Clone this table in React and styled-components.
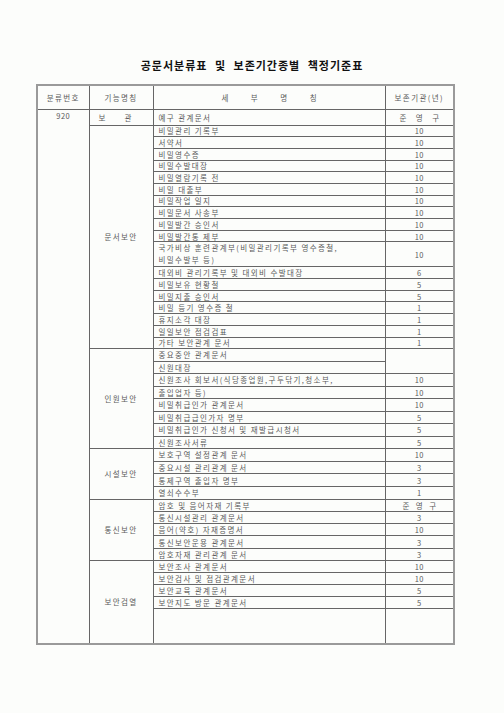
import styled, { createGlobalStyle } from "styled-components";

const GlobalStyle = createGlobalStyle`
  body {
    margin: 0;
    background: #fcfdfb;
  }
`;

const Page = styled.div`
  width: 504px;
  min-height: 713px;
  box-sizing: border-box;
  padding-top: 58px;
  font-family: "Noto Sans CJK KR", "Noto Sans", sans-serif;
  color: #5a5a5a;
`;

const Title = styled.h1`
  margin: 0;
  text-align: center;
  font-size: 11px;
  line-height: 14px;
  font-weight: 700;
  color: #111;
  letter-spacing: 1px;
  word-spacing: 4px;
`;

const Table = styled.table`
  margin: 12px 0 0 36px;
  width: 417px;
  border-collapse: collapse;
  table-layout: fixed;
  border: 2px solid #9a9a9a;
  font-size: 7.5px;
  letter-spacing: 1.4px;
  line-height: 9px;
`;

const Row = styled.tr`
  height: ${(p) => p.$h}px;
`;

const Cell = styled.td`
  border: 1px solid #666;
  padding: 0;
  white-space: nowrap;
  vertical-align: middle;
  overflow: visible;
`;

const HeadCell = styled(Cell)`
  text-align: center;
`;

const CodeCell = styled(Cell)`
  vertical-align: top;
  text-align: center;
  padding-top: 1px;
  letter-spacing: 0.5px;
`;

const GroupCell = styled(Cell)`
  text-align: center;
  padding-right: ${(p) => p.$shift || 0}px;
`;

const NameCell = styled(Cell)`
  padding-left: 5px;
  text-align: left;
`;

const Line = styled.div`
  line-height: 12px;
`;

const ValueCell = styled(Cell)`
  text-align: center;
  letter-spacing: 0.3px;
`;

/* spaced-out label whose trailing letter gap is cancelled */
const Spread = styled.span`
  letter-spacing: ${(p) => p.$gap}px;
  margin-right: -${(p) => p.$gap}px;
`;

const groups = [
  {
    name: "문서보안",
    h: 11.7,
    items: [
      ["비밀관리 기록부", "10"],
      ["서약서", "10"],
      ["비밀영수증", "10"],
      ["비밀수발대장", "10"],
      ["비밀열람기록 전", "10"],
      ["비밀 대출부", "10"],
      ["비밀작업 일지", "10"],
      ["비밀문서 사송부", "10"],
      ["비밀발간 승인서", "10"],
      ["비밀발간통 제부", "10"],
      [["국가비상 훈련관계부(비밀관리기록부 영수증철,", "비밀수발부 등)"], "10", { h: 25 }],
      ["대외비 관리기록부 및 대외비 수발대장", "6"],
      ["비밀보유 현황철", "5"],
      ["비밀지출 승인서", "5"],
      ["비밀 등기 영수증 철", "1"],
      ["휴지소각 대장", "1"],
      ["일일보안 점검검표", "1"],
      ["가타 보안관계 문서", "1"],
    ],
  },
  {
    name: "인원보안",
    h: 12.5,
    items: [
      ["중요중안 관계문서", "", { span: 2 }],
      ["신원대장", null],
      ["신원조사 회보서(식당종업원,구두닦기,청소부,", "10"],
      ["출입업자 등)", "10"],
      ["비밀취급인가 관계문서", "10"],
      ["비밀취급급인가자 명부", "5"],
      ["비밀취급인가 신청서 및 재발급시청서", "5"],
      ["신원조사서류", "5"],
    ],
  },
  {
    name: "시설보안",
    h: 12.6,
    items: [
      ["보호구역 설정관계 문서", "10"],
      ["중요시설 관리관계 문서", "3"],
      ["통제구역 출입자 명부", "3"],
      ["열쇠수수부", "1"],
    ],
  },
  {
    name: "통신보안",
    h: 12.3,
    items: [
      ["암호 및 음어자재 기록부", "준영구", { gap: 6.5 }],
      ["통신시설관리 관계문서", "3"],
      ["음어(약호) 자재증명서", "10"],
      ["통신보안운용 관계문서", "3"],
      ["암호자재 관리관계 문서", "3"],
    ],
  },
  {
    name: "보안검열",
    h: 12.1,
    items: [
      ["보안조사 관계문서", "10"],
      ["보안검사 및 점검관계문서", "10"],
      ["보안교육 관계문서", "5"],
      ["보안지도 방문 관계문서", "5"],
      ["", "", { h: 35 }],
    ],
  },
];

const totalRows = 1 + groups.reduce((n, g) => n + g.items.length, 0);

function GroupRows({ group }) {
  return group.items.map(([name, value, opt = {}], i) => (
    <Row key={i} $h={opt.h || group.h}>
      {i === 0 && (
        <GroupCell rowSpan={group.items.length}>{group.name}</GroupCell>
      )}
      <NameCell>
        {Array.isArray(name)
          ? name.map((line) => <Line key={line}>{line}</Line>)
          : name}
      </NameCell>
      {value !== null && (
        <ValueCell rowSpan={opt.span || 1}>
          {opt.gap ? <Spread $gap={opt.gap}>{value}</Spread> : value}
        </ValueCell>
      )}
    </Row>
  ));
}

export default function App() {
  return (
    <>
      <GlobalStyle />
      <Page>
        <Title>공문서분류표 및 보존기간종별 책정기준표</Title>
        <Table>
          <colgroup>
            <col style={{ width: 52 }} />
            <col style={{ width: 64 }} />
            <col style={{ width: 232 }} />
            <col style={{ width: 69 }} />
          </colgroup>
          <thead>
            <Row $h={24}>
              <HeadCell>분류번호</HeadCell>
              <HeadCell>기능명칭</HeadCell>
              <HeadCell>
                <Spread $gap={22.5}>세부명칭</Spread>
              </HeadCell>
              <HeadCell>보존기관(년)</HeadCell>
            </Row>
          </thead>
          <tbody>
            <Row $h={16}>
              <CodeCell rowSpan={totalRows}>920</CodeCell>
              <GroupCell $shift={12}>
                <Spread $gap={19}>보관</Spread>
              </GroupCell>
              <NameCell>예구 관계문서</NameCell>
              <ValueCell>
                <Spread $gap={9.5}>준영구</Spread>
              </ValueCell>
            </Row>
            {groups.map((g) => (
              <GroupRows key={g.name} group={g} />
            ))}
          </tbody>
        </Table>
      </Page>
    </>
  );
}
